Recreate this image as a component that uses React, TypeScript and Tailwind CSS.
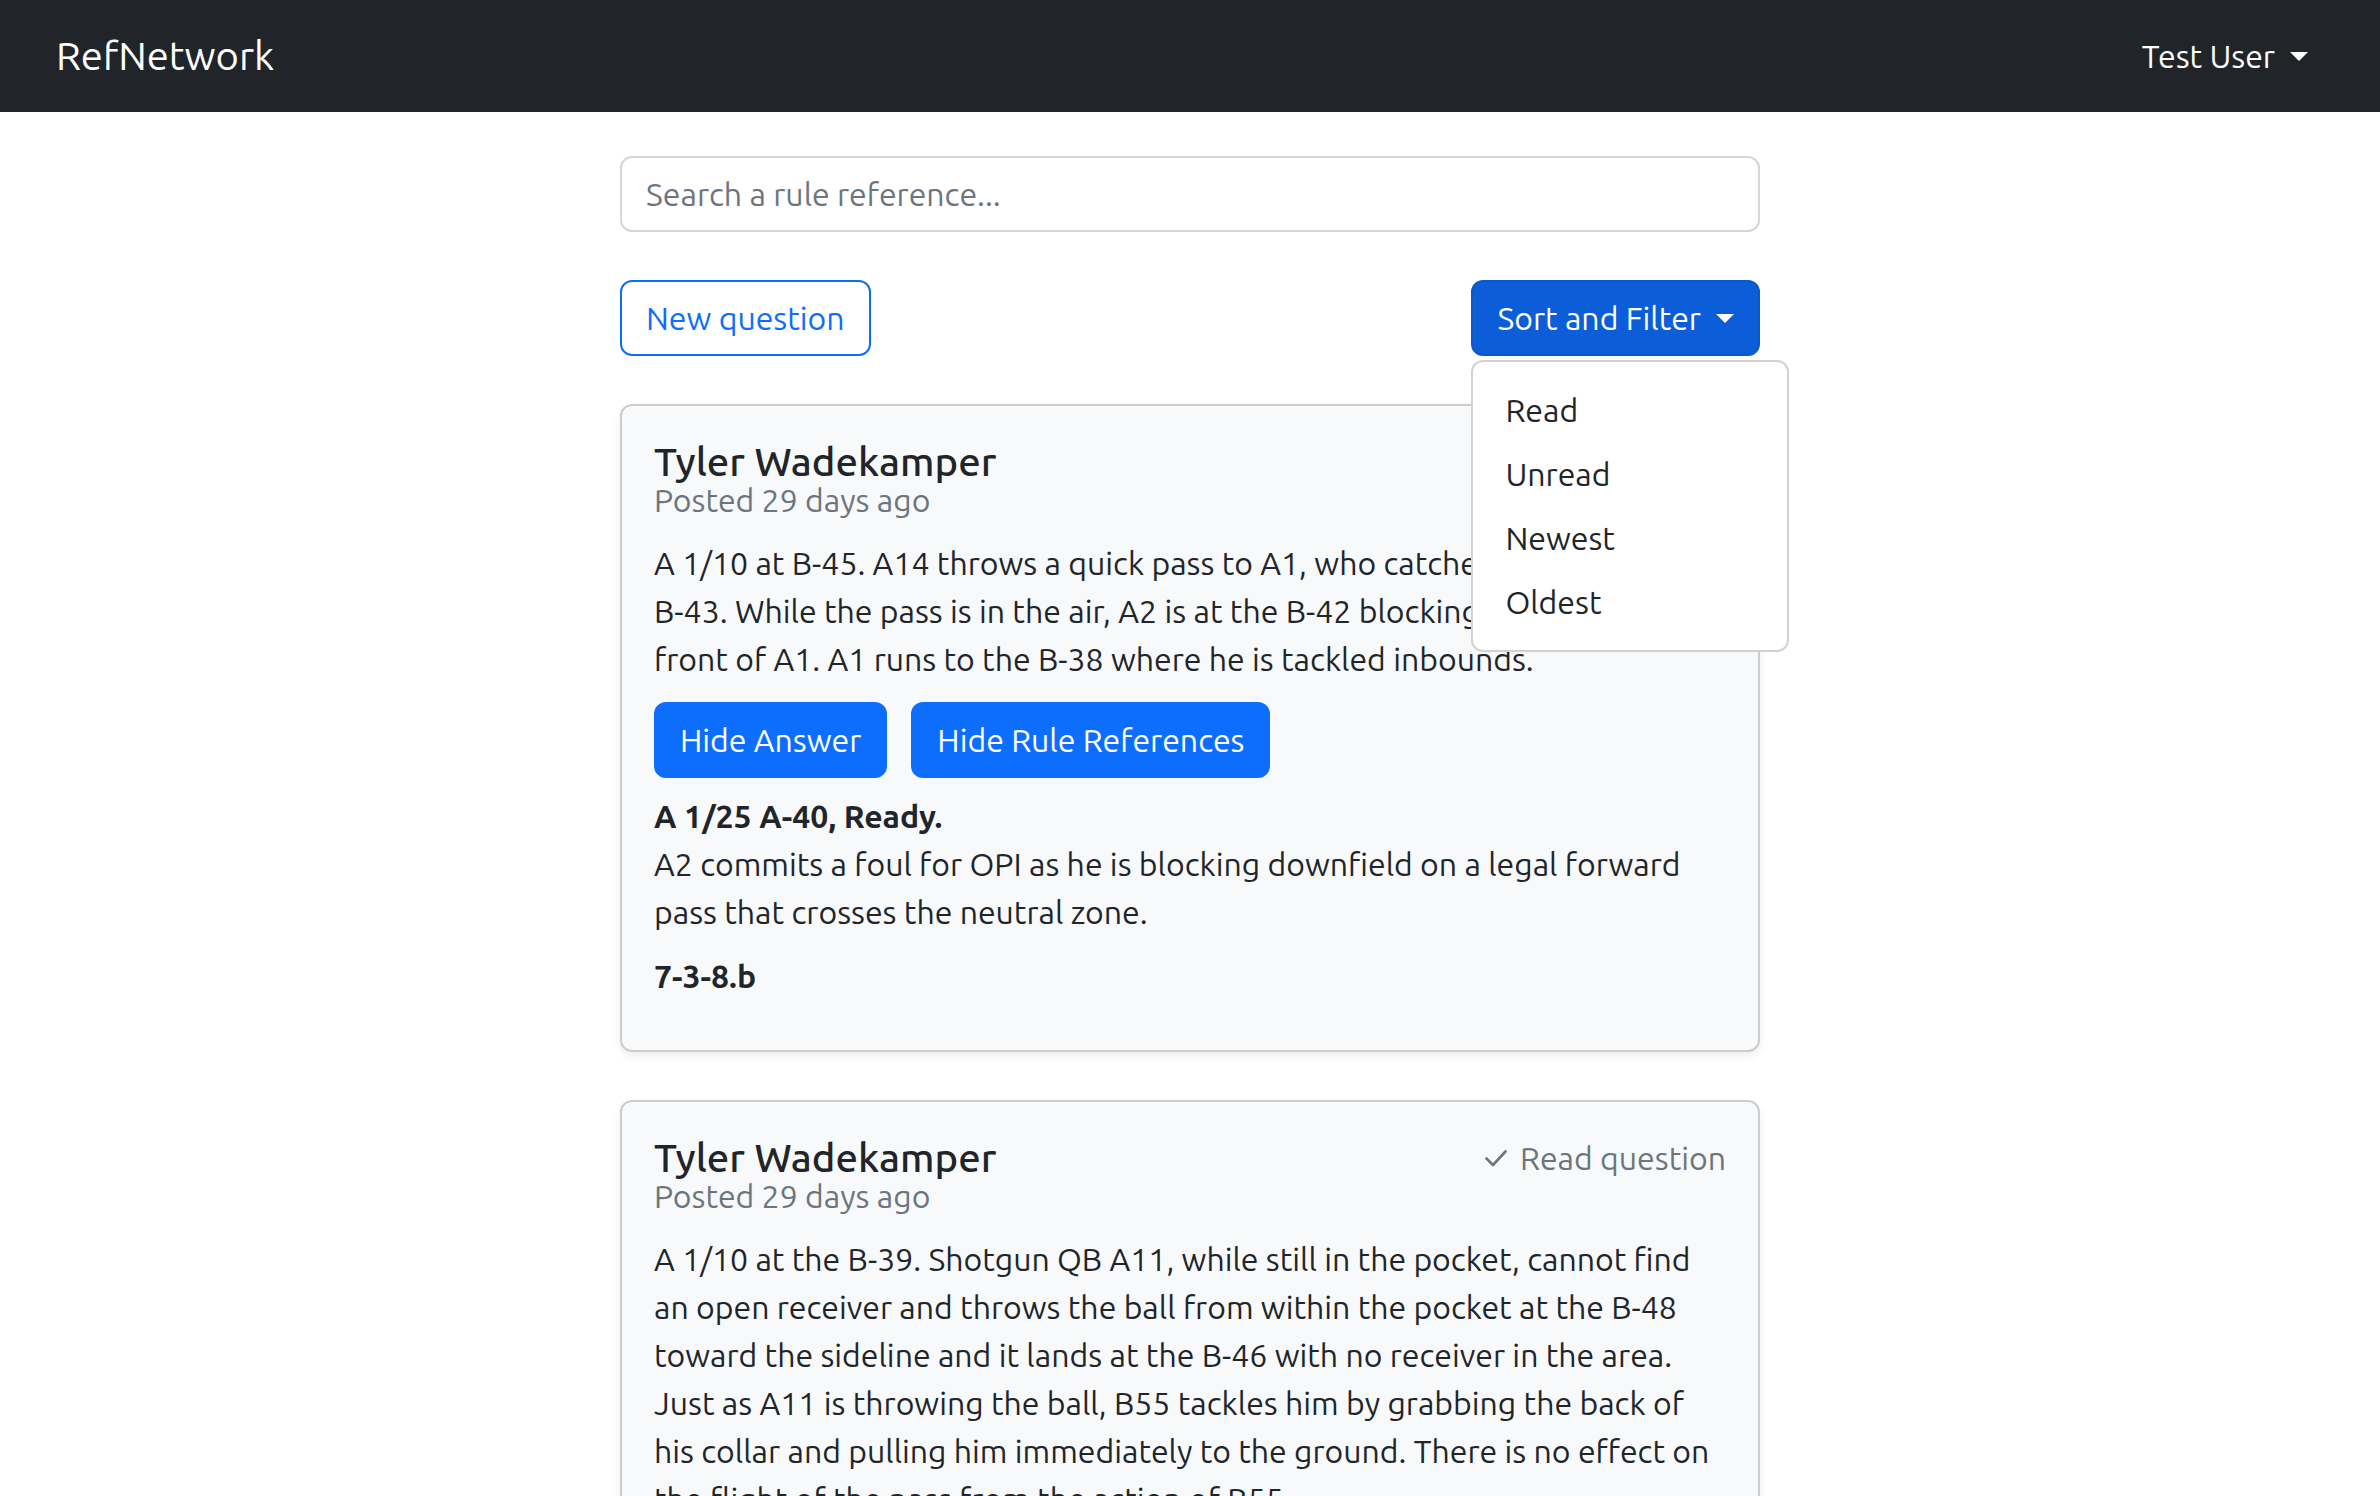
import React from "react";

function Caret() {
  return (
    <span className="ml-[15px] inline-block h-0 w-0 border-x-[9.6px] border-t-[9.6px] border-b-0 border-x-transparent border-t-current align-[0.255em]" />
  );
}

function CheckIcon() {
  return (
    <svg width="22" height="17" viewBox="0 0 22 17" className="mr-[13px]" fill="none">
      <polyline
        points="1.5,8.5 8,15 20.5,1.5"
        stroke="#6c757d"
        strokeWidth="2.6"
        strokeLinecap="round"
        strokeLinejoin="round"
      />
    </svg>
  );
}

type Question = {
  author: string;
  posted: string;
  lines: string[];
  read?: boolean;
  answer?: { head: string; body: string; rule: string };
};

const questions: Question[] = [
  {
    author: "Tyler Wadekamper",
    posted: "Posted 29 days ago",
    lines: [
      "A 1/10 at B-45. A14 throws a quick pass to A1, who catches it at the",
      "B-43. While the pass is in the air, A2 is at the B-42 blocking B22 in",
      "front of A1. A1 runs to the B-38 where he is tackled inbounds.",
    ],
    answer: {
      head: "A 1/25 A-40, Ready.",
      body: "A2 commits a foul for OPI as he is blocking downfield on a legal forward pass that crosses the neutral zone.",
      rule: "7-3-8.b",
    },
  },
  {
    author: "Tyler Wadekamper",
    posted: "Posted 29 days ago",
    read: true,
    lines: [
      "A 1/10 at the B-39. Shotgun QB A11, while still in the pocket, cannot find an open receiver and throws the ball from within the pocket at the B-48 toward the sideline and it lands at the B-46 with no receiver in the area. Just as A11 is throwing the ball, B55 tackles him by grabbing the back of his collar and pulling him immediately to the ground. There is no effect on the flight of the pass from the action of B55.",
    ],
  },
];

function QuestionCard({ q }: { q: Question }) {
  return (
    <div className="mb-[48px] rounded-[12px] border-2 border-[rgba(0,0,0,0.175)] bg-[#f8f9fa] px-[32px] pt-[32px] pb-[50px] shadow-[0_4px_8px_rgba(0,0,0,0.075)]">
      <div className="flex items-start justify-between">
        <div>
          <h5 className="text-[40px] font-medium leading-[48px] text-[#212529]">{q.author}</h5>
          <div className="mt-[-10px] text-[32px] leading-[48px] text-[#6c757d]">{q.posted}</div>
        </div>
        {q.read && (
          <div className="flex items-center text-[32px] leading-[48px] text-[#6c757d]">
            <CheckIcon />
            <span>Read question</span>
          </div>
        )}
      </div>
      <p className="mt-[15px] text-[32px] leading-[48px]">
        {q.lines.map((l, i) => (
          <React.Fragment key={i}>
            {i > 0 && <br />}
            {l}
          </React.Fragment>
        ))}
      </p>
      {q.answer && (
        <>
          <div className="mt-[19px] flex gap-[24px]">
            <button className="h-[76px] rounded-[12px] border-2 border-[#0d6efd] bg-[#0d6efd] px-[24px] text-[32px] leading-[48px] text-white">
              Hide Answer
            </button>
            <button className="h-[76px] rounded-[12px] border-2 border-[#0d6efd] bg-[#0d6efd] px-[24px] text-[32px] leading-[48px] text-white">
              Hide Rule References
            </button>
          </div>
          <div className="mt-[14px] text-[32px] leading-[48px]">
            <div className="font-bold">{q.answer.head}</div>
            <div>{q.answer.body}</div>
          </div>
          <div className="mt-[16px] text-[32px] font-bold leading-[48px]">{q.answer.rule}</div>
        </>
      )}
    </div>
  );
}

export default function App() {
  return (
    <div className="min-h-screen bg-white font-[Ubuntu,sans-serif] text-[#212529]">
      <nav className="flex h-[112px] items-center bg-[#212529] px-[32px]">
        <div className="flex flex-1 items-center justify-between px-[24px]">
          <span className="text-[40px] leading-[60px] text-white">RefNetwork</span>
          <button className="flex items-center px-[16px] text-[32px] leading-[48px] text-white">
            Test User
            <Caret />
          </button>
        </div>
      </nav>

      <main className="mx-auto w-[1140px] pt-[44px]">
        <input
          className="block h-[76px] w-full rounded-[12px] border-2 border-[#d3d7db] bg-white px-[24px] text-[32px] leading-[48px] text-[#212529] outline-none placeholder:text-[#6c757d]"
          placeholder="Search a rule reference..."
        />

        <div className="mt-[48px] flex items-start justify-between">
          <button className="h-[76px] rounded-[12px] border-2 border-[#0d6efd] bg-white px-[24px] text-[32px] leading-[48px] text-[#0d6efd]">
            New question
          </button>
          <div className="relative">
            <button className="flex h-[76px] items-center rounded-[12px] border-2 border-[#0a58ca] bg-[#0b5ed7] px-[24px] text-[32px] leading-[48px] text-white">
              Sort and Filter
              <Caret />
            </button>
            <div className="absolute left-0 top-full z-10 mt-[4px] w-[318px] rounded-[12px] border-2 border-[rgba(0,0,0,0.175)] bg-white py-[16px]">
              {["Read", "Unread", "Newest", "Oldest"].map((item) => (
                <div key={item} className="px-[32px] py-[8px] text-[32px] leading-[48px] text-[#212529]">
                  {item}
                </div>
              ))}
            </div>
          </div>
        </div>

        <div className="mt-[48px]">
          {questions.map((q, i) => (
            <QuestionCard key={i} q={q} />
          ))}
        </div>
      </main>
    </div>
  );
}
